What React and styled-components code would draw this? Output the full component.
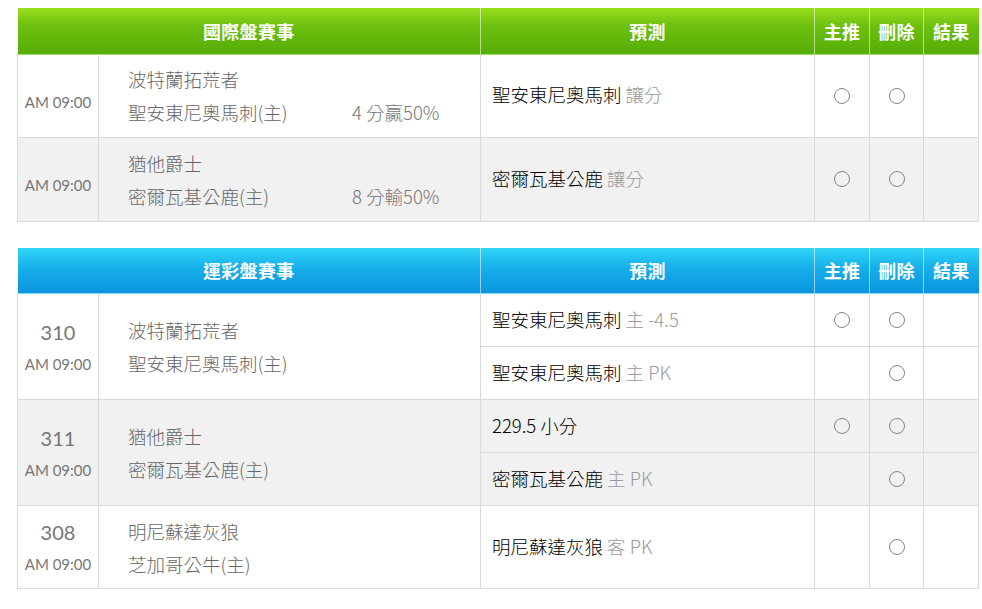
import React from "react";
import styled, { createGlobalStyle, css } from "styled-components";

const GlobalStyle = createGlobalStyle`
  html, body { margin: 0; padding: 0; background: #fff; }
  body {
    font-family: Lato, "Noto Sans CJK TC", "Noto Sans", sans-serif;
    color: #555;
  }
`;

const Page = styled.div`
  display: flex;
  flex-direction: column;
  gap: 26px;
  padding: 8px 0 0 17px;
`;

const Table = styled.table`
  width: 961px;
  border-collapse: collapse;
  table-layout: fixed;
`;

const HEADS = {
  green: css`
    background: linear-gradient(#9ade1e 0%, #6cbf0e 40%, #56ad06 100%);
  `,
  blue: css`
    background: linear-gradient(#30d5f6 0%, #16aeea 45%, #0a93de 100%);
  `,
};

const HeadRow = styled.tr`
  ${({ $tone }) => HEADS[$tone]}
  height: 46px;
`;

const HeadCell = styled.th`
  padding: 0;
  color: #fff;
  font-family: "Noto Sans CJK TC", sans-serif;
  font-weight: 700;
  font-size: 18px;
  letter-spacing: 0.3px;
  text-align: center;
  vertical-align: middle;
  border-left: 1px solid rgba(255, 255, 255, 0.55);
  border-bottom: 1px solid ${({ $tone }) => ($tone === "blue" ? "#7fe0f8" : "#a8dc6a")};
  &:first-child { border-left: none; }
`;

const Row = styled.tr`
  background: ${({ $alt }) => ($alt ? "#f1f1f1" : "#fff")};
  height: ${({ $h }) => $h}px;
`;

const Cell = styled.td`
  border: 1px solid #dadada;
  padding: 0;
  vertical-align: middle;
`;

const TimeCell = styled(Cell)`
  text-align: center;
  color: #777;
  padding: ${({ $offset }) => ($offset ? "12px 0 0" : "0 0 4px")};
`;

const Num = styled.div`
  font-size: 20px;
  line-height: 32px;
  color: #777;
`;

const Time = styled.div`
  font-size: 15px;
  line-height: 20px;
  color: #777;
  margin-top: ${({ $gap }) => ($gap ? 6 : 0)}px;
`;

const MatchCell = styled(Cell)`
  padding-left: 29px;
`;

const TeamLine = styled.div`
  display: flex;
  align-items: center;
  height: 33px;
  font-family: "Noto Sans CJK TC", sans-serif;
  font-weight: 300;
  font-size: 18.5px;
  color: #666;
`;

const TeamName = styled.span`
  width: 224px;
  flex: none;
  white-space: nowrap;
`;

const Score = styled.span`
  color: #777;
  white-space: nowrap;
`;

const PredCell = styled(Cell)`
  padding: 0 0 3px 11px;
  font-family: "Noto Sans CJK TC", sans-serif;
  font-weight: 300;
  font-size: 18.5px;
  line-height: 26px;
  color: #000;
  white-space: nowrap;
`;

const Muted = styled.span`
  color: #9a9a9a;
`;

const MarkCell = styled(Cell)`
  text-align: center;
`;

const Circle = styled.span`
  display: block;
  margin: 0 auto;
  width: 14px;
  height: 14px;
  border: 1.5px solid #858585;
  border-radius: 50%;
`;

const Cols = () => (
  <colgroup>
    <col style={{ width: 81 }} />
    <col style={{ width: 382 }} />
    <col style={{ width: 334 }} />
    <col style={{ width: 55 }} />
    <col style={{ width: 54 }} />
    <col style={{ width: 55 }} />
  </colgroup>
);

const Head = ({ tone, title }) => (
  <thead>
    <HeadRow $tone={tone}>
      <HeadCell $tone={tone} colSpan={2}>{title}</HeadCell>
      <HeadCell $tone={tone}>預測</HeadCell>
      <HeadCell $tone={tone}>主推</HeadCell>
      <HeadCell $tone={tone}>刪除</HeadCell>
      <HeadCell $tone={tone}>結果</HeadCell>
    </HeadRow>
  </thead>
);

const Pred = ({ main, sub }) => (
  <>
    {main} <Muted>{sub}</Muted>
  </>
);

const intl = [
  { away: "波特蘭拓荒者", home: "聖安東尼奧馬刺(主)", score: "4 分贏50%", pick: "聖安東尼奧馬刺", sub: "讓分" },
  { away: "猶他爵士", home: "密爾瓦基公鹿(主)", score: "8 分輸50%", pick: "密爾瓦基公鹿", sub: "讓分" },
];

const lottery = [
  {
    no: "310",
    away: "波特蘭拓荒者",
    home: "聖安東尼奧馬刺(主)",
    picks: [
      { main: "聖安東尼奧馬刺", sub: "主 -4.5", top: true },
      { main: "聖安東尼奧馬刺", sub: "主 PK", top: false },
    ],
  },
  {
    no: "311",
    away: "猶他爵士",
    home: "密爾瓦基公鹿(主)",
    picks: [
      { main: "229.5 小分", sub: "", top: true },
      { main: "密爾瓦基公鹿", sub: "主 PK", top: false },
    ],
  },
  {
    no: "308",
    away: "明尼蘇達灰狼",
    home: "芝加哥公牛(主)",
    picks: [{ main: "明尼蘇達灰狼", sub: "客 PK", top: false, tall: true }],
  },
];

export default function App() {
  return (
    <>
      <GlobalStyle />
      <Page>
        <Table>
          <Cols />
          <Head tone="green" title="國際盤賽事" />
          <tbody>
            {intl.map((m, i) => (
              <Row key={i} $alt={i % 2 === 1} $h={i === 0 ? 83 : 84}>
                <TimeCell $offset>
                  <Time>AM 09:00</Time>
                </TimeCell>
                <MatchCell>
                  <TeamLine>
                    <TeamName>{m.away}</TeamName>
                  </TeamLine>
                  <TeamLine>
                    <TeamName>{m.home}</TeamName>
                    <Score>{m.score}</Score>
                  </TeamLine>
                </MatchCell>
                <PredCell>
                  <Pred main={m.pick} sub={m.sub} />
                </PredCell>
                <MarkCell><Circle /></MarkCell>
                <MarkCell><Circle /></MarkCell>
                <MarkCell />
              </Row>
            ))}
          </tbody>
        </Table>

        <Table>
          <Cols />
          <Head tone="blue" title="運彩盤賽事" />
          <tbody>
            {lottery.map((g, gi) =>
              g.picks.map((p, pi) => (
                <Row key={`${gi}-${pi}`} $alt={gi % 2 === 1} $h={p.tall ? 83 : 53}>
                  {pi === 0 && (
                    <>
                      <TimeCell rowSpan={g.picks.length}>
                        <Num>{g.no}</Num>
                        <Time $gap>AM 09:00</Time>
                      </TimeCell>
                      <MatchCell rowSpan={g.picks.length}>
                        <TeamLine>
                          <TeamName>{g.away}</TeamName>
                        </TeamLine>
                        <TeamLine>
                          <TeamName>{g.home}</TeamName>
                        </TeamLine>
                      </MatchCell>
                    </>
                  )}
                  <PredCell>
                    <Pred main={p.main} sub={p.sub} />
                  </PredCell>
                  <MarkCell>{p.top && <Circle />}</MarkCell>
                  <MarkCell><Circle /></MarkCell>
                  <MarkCell />
                </Row>
              ))
            )}
          </tbody>
        </Table>
      </Page>
    </>
  );
}
